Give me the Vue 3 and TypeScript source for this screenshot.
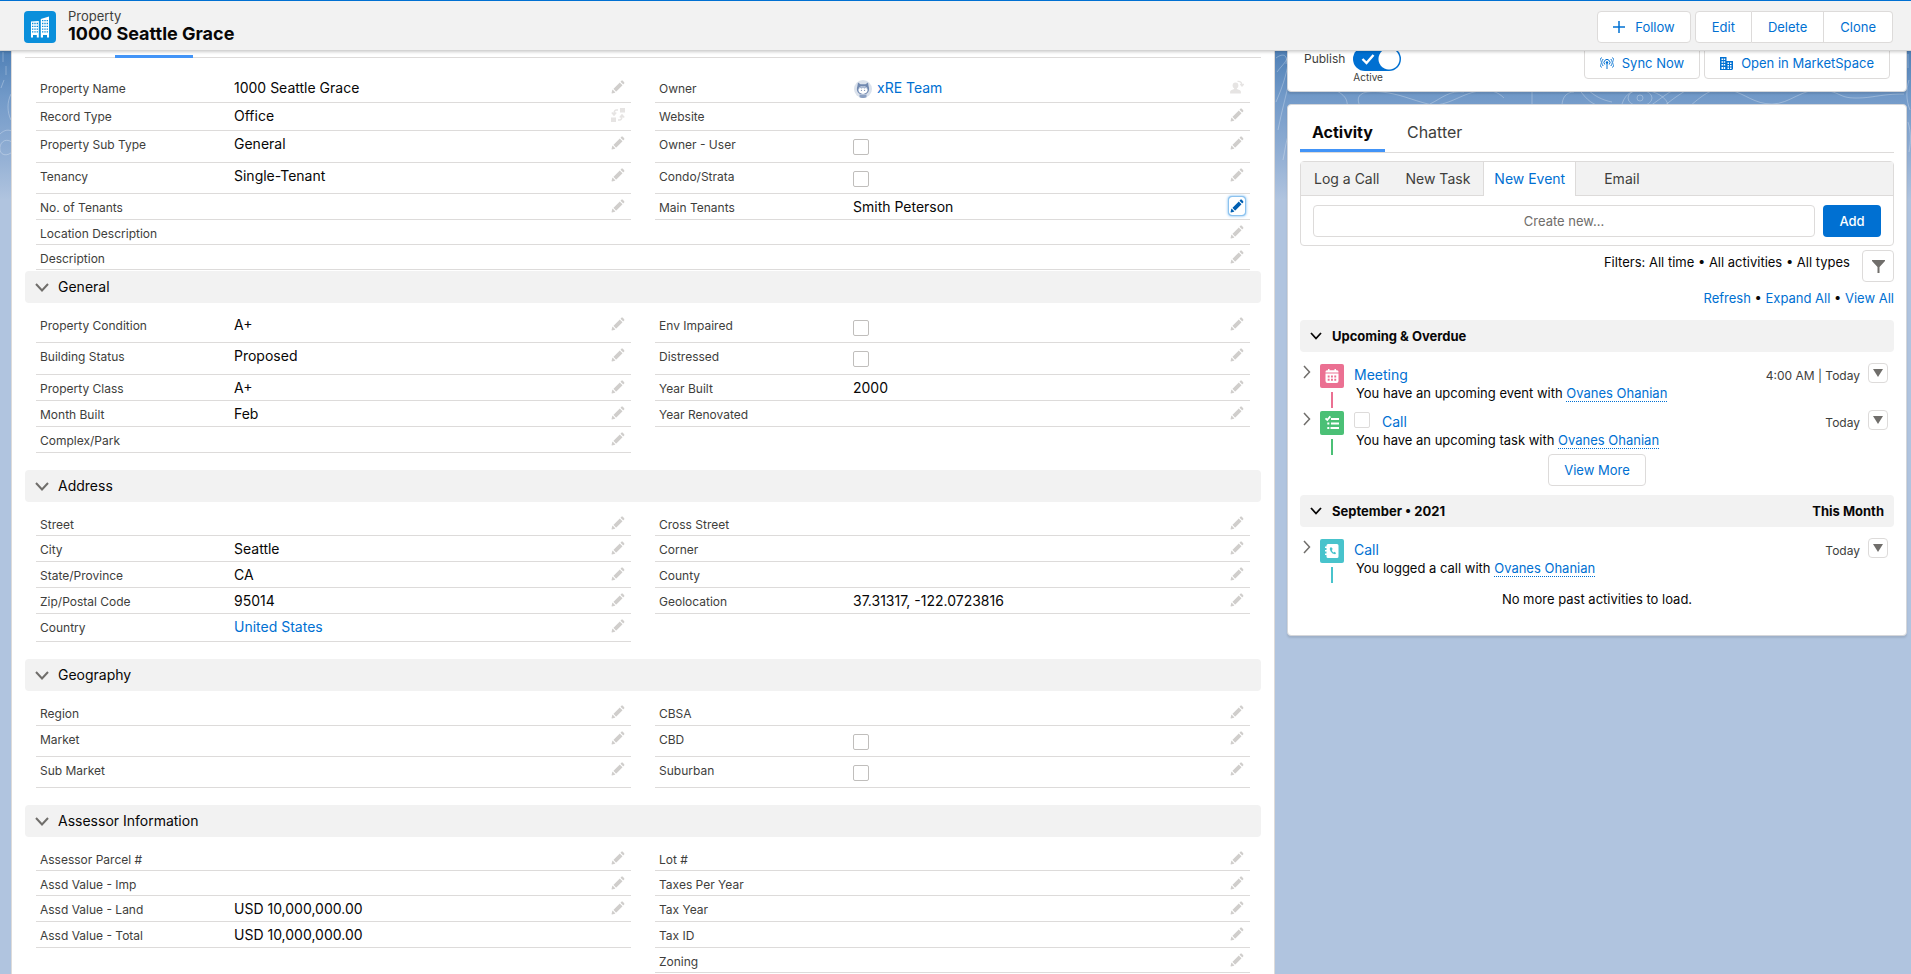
<script setup lang="ts">
import { ref } from 'vue'

type Size = 'xs' | 'sm' | 'md' | 'lg' | 'xl'
type Action = 'edit' | 'type' | 'owner' | 'none'

interface Field {
  id: string
  label: string
  size: Size
  value?: string
  link?: boolean
  avatar?: boolean
  check?: boolean
  action: Action
  focused?: boolean
}

interface Section {
  title: string
  left: Field[]
  right: Field[]
  full: Field[]
}

function f(label: string, size: Size, extra: Partial<Field> = {}): Field {
  return { id: label.toLowerCase().replace(/[^a-z]+/g, '-'), label, size, action: 'edit', ...extra }
}

const sections: Section[] = [
  {
    title: '',
    left: [
      f('Property Name', 'md', { value: '1000 Seattle Grace' }),
      f('Record Type', 'md', { value: 'Office', action: 'type' }),
      f('Property Sub Type', 'xl', { value: 'General' }),
      f('Tenancy', 'lg', { value: 'Single-Tenant' }),
      f('No. of Tenants', 'sm'),
    ],
    right: [
      f('Owner', 'md', { value: 'xRE Team', link: true, avatar: true, action: 'owner' }),
      f('Website', 'md'),
      f('Owner - User', 'xl', { check: true }),
      f('Condo/Strata', 'lg', { check: true }),
      f('Main Tenants', 'sm', { value: 'Smith Peterson', focused: true }),
    ],
    full: [f('Location Description', 'xs'), f('Description', 'xs')],
  },
  {
    title: 'General',
    left: [
      f('Property Condition', 'lg', { value: 'A+' }),
      f('Building Status', 'xl', { value: 'Proposed' }),
      f('Property Class', 'sm', { value: 'A+' }),
      f('Month Built', 'sm', { value: 'Feb' }),
      f('Complex/Park', 'sm'),
    ],
    right: [
      f('Env Impaired', 'lg', { check: true }),
      f('Distressed', 'xl', { check: true }),
      f('Year Built', 'sm', { value: '2000' }),
      f('Year Renovated', 'sm'),
    ],
    full: [],
  },
  {
    title: 'Address',
    left: [
      f('Street', 'xs'),
      f('City', 'sm', { value: 'Seattle' }),
      f('State/Province', 'sm', { value: 'CA' }),
      f('Zip/Postal Code', 'sm', { value: '95014' }),
      f('Country', 'md', { value: 'United States', link: true }),
    ],
    right: [
      f('Cross Street', 'xs'),
      f('Corner', 'sm'),
      f('County', 'sm'),
      f('Geolocation', 'sm', { value: '37.31317, -122.0723816' }),
    ],
    full: [],
  },
  {
    title: 'Geography',
    left: [f('Region', 'sm'), f('Market', 'lg'), f('Sub Market', 'lg')],
    right: [f('CBSA', 'sm'), f('CBD', 'lg', { check: true }), f('Suburban', 'lg', { check: true })],
    full: [],
  },
  {
    title: 'Assessor Information',
    left: [
      f('Assessor Parcel #', 'xs'),
      f('Assd Value - Imp', 'xs'),
      f('Assd Value - Land', 'sm', { value: 'USD 10,000,000.00' }),
      f('Assd Value - Total', 'sm', { value: 'USD 10,000,000.00', action: 'none' }),
    ],
    right: [f('Lot #', 'xs'), f('Taxes Per Year', 'xs'), f('Tax Year', 'sm'), f('Tax ID', 'sm'), f('Zoning', 'xs')],
    full: [],
  },
]

function groups(s: Section) {
  return [
    { key: 'left', fields: s.left },
    { key: 'right', fields: s.right },
    { key: 'full', fields: s.full },
  ].filter((g) => g.fields.length > 0)
}

interface Activity {
  kind: 'event' | 'task' | 'call'
  title: string
  text: string
  when: string
}

const timeline: { title: string; note: string; items: Activity[]; more: boolean }[] = [
  {
    title: 'Upcoming & Overdue',
    note: '',
    more: true,
    items: [
      { kind: 'event', title: 'Meeting', text: 'You have an upcoming event with', when: '4:00 AM | Today' },
      { kind: 'task', title: 'Call', text: 'You have an upcoming task with', when: 'Today' },
    ],
  },
  {
    title: 'September • 2021',
    note: 'This Month',
    more: false,
    items: [{ kind: 'call', title: 'Call', text: 'You logged a call with', when: 'Today' }],
  },
]

const composerTabs = ['Log a Call', 'New Task', 'New Event', 'Email']
const activeComposer = ref('New Event')
const published = ref(true)
const draft = ref('')
</script>

<template>
  <div class="page">
    <svg class="topo" viewBox="0 0 1911 150" preserveAspectRatio="none" aria-hidden="true">
      <g fill="none" stroke="#fff" stroke-opacity=".28">
        <path d="M3 2v10M6 16v9M4 30l-3 8M11 44c-4 8-4 18 0 26M0 84c5-5 9-4 12-3M12 92c-8-5-13 2-12 8s8 6 12 2" />
        <path d="M1276 8c8-6 12-2 10 6M1277 22c6-8 10-10 11-18M1276 52c6-14 10-26 12-38M1278 80c4-20 7-30 10-44M1283 110c2-10 3-18 5-24" />
        <path d="M1289 38c14 6 30-6 46 2s10 14 14 18M1360 56c-6-12 4-16 22-14s30 8 46 12 30-8 46-12 24 0 30 6M1430 54c12-6 20-14 34-12M1532 42v12M1562 56c0-8 4-14 12-14M1578 38c6 8 12 16 22 18M1586 38c8 8 16 12 26 14M1622 54c4-12 12-14 20-14s22 4 26 14M1650 56c12-8 20-16 30-18M1664 56c10-8 16-12 26-18M1690 56c14-12 24-20 40-16s24 14 42 14 30-16 50-14 16 8 34 8 24-4 48-4" />
        <ellipse cx="1640" cy="48" rx="12" ry="8" />
        <circle cx="1640" cy="48" r="3" />
        <path d="M1908 4v14M1909 30c-3 10-3 20 1 30M1908 72c3 10 3 20 1 30" />
      </g>
    </svg>

    <header class="record-header">
      <svg class="record-icon" viewBox="0 0 32 32" aria-hidden="true">
        <rect width="32" height="32" rx="4" fill="#0a8fdb" />
        <path fill="#fff" d="M7 10.500l7.800-.5v16.500h-2v-2.500h-3.800v2.500H7zM16.800 8l8.200-2.500v21h-2v-2.500h-4v2.500h-2.200z" />
        <path stroke="#0a8fdb" stroke-width="1.300" stroke-dasharray="1.400 .9" d="M8 12.500h6M8 15.300h6M8 18.100h6M8 20.900h6M18 9.700h6M18 12.500h6M18 15.300h6M18 18.100h6M18 20.900h6" />
      </svg>
      <div class="record-name">
        <p>Property</p>
        <h1>1000 Seattle Grace</h1>
      </div>
      <button type="button" class="btn follow">
        <svg width="12" height="12" viewBox="0 0 12 12" aria-hidden="true"><path d="M6 0v12M0 6h12" stroke="currentColor" stroke-width="1.500" /></svg>
        Follow
      </button>
      <div class="btn-group">
        <button type="button" class="btn">Edit</button>
        <button type="button" class="btn">Delete</button>
        <button type="button" class="btn">Clone</button>
      </div>
    </header>

    <div class="columns">
      <main class="panel">
        <div class="tab-rule"><span></span></div>
        <section v-for="s in sections" :key="s.title" class="section">
          <h2 v-if="s.title">
            <button type="button" class="section-title">
              <svg width="14" height="9" viewBox="0 0 14 9" aria-hidden="true"><path d="M1 1l6 6.500 6-6.500" fill="none" stroke="#706e6b" stroke-width="2" /></svg>
              {{ s.title }}
            </button>
          </h2>
          <div class="fields">
            <dl v-for="g in groups(s)" :key="g.key" :class="g.key">
              <div v-for="x in g.fields" :key="x.id" class="field" :class="x.size">
                <dt>
                  <label v-if="x.check" :for="x.id">{{ x.label }}</label>
                  <template v-else>{{ x.label }}</template>
                </dt>
                <dd>
                  <input v-if="x.check" :id="x.id" type="checkbox" class="tick" />
                  <svg v-if="x.avatar" class="avatar" viewBox="0 0 18 18" aria-hidden="true">
                    <circle cx="9" cy="9" r="9" fill="#dbe2ec" />
                    <path fill="#7189b0" d="M4 2.500l2.500 1.700h5L14 2.500l.6 3.800c1.300 3.700-.1 6.700-2.600 7.700h-6c-2.500-1-3.900-4-2.600-7.700z" />
                    <path fill="#8ba0c2" d="M5.500 14.500h7v2.800a9 9 0 0 1-7 0z" />
                    <ellipse cx="9" cy="10" rx="4.600" ry="3.900" fill="#fff" />
                    <path d="M4.600 8.800c.8-2.200 2.800-2.800 4.400-2.800s3.600.6 4.400 2.800l-1.800-.9-1.200.9-1.400-1-1.400 1-1.200-.9z" fill="#a5b5cf" />
                    <circle cx="7.400" cy="10.300" r=".6" fill="#7189b0" /><circle cx="10.600" cy="10.300" r=".6" fill="#7189b0" />
                  </svg>
                  <a v-if="x.link" href="#">{{ x.value }}</a>
                  <template v-else>{{ x.value }}</template>
                </dd>
                <button v-if="x.action !== 'none'" type="button" class="edit" :class="{ focused: x.focused, faint: x.action !== 'edit' }" :aria-label="`Edit ${x.label}`">
                  <svg v-if="x.action === 'edit'" viewBox="0 0 52 52" aria-hidden="true">
                    <path d="M9.500 33.400l8.900 8.900c.4.400 1 .4 1.400 0L42 20c.4-.4.400-1 0-1.400l-8.800-8.800c-.4-.4-1-.4-1.400 0L9.500 32.100c-.4.400-.4 1 0 1.300zM36.100 5.700c-.4.400-.4 1 0 1.400l8.800 8.800c.4.400 1 .4 1.400 0l2.500-2.500c1.600-1.500 1.600-3.900 0-5.500l-4.700-4.700c-1.600-1.600-4.100-1.600-5.700 0l-2.300 2.500zM2.100 48.200c-.2 1 .7 1.900 1.700 1.700l10.900-2.600c.4-.1.700-.3.900-.5l.2-.2c.2-.2.300-.9-.1-1.300l-9-9c-.4-.4-1.100-.3-1.300-.1s-.2.200-.2.200c-.3.300-.4.600-.5.900L2.100 48.200z" />
                  </svg>
                  <svg v-else-if="x.action === 'type'" viewBox="0 0 14 14" aria-hidden="true">
                    <path d="M9 0h5v4.500H9zM0 9.500h5V14H0z" />
                    <path d="M7 2H5.500Q3 2 3 6M.8 4.500L3 7l2.200-2.500M7 12h1.500Q11 12 11 8M8.800 9.500L11 7l2.200 2.500" fill="none" stroke="currentColor" stroke-width="1.500" />
                  </svg>
                  <svg v-else viewBox="0 0 14 14" aria-hidden="true">
                    <circle cx="5.500" cy="5.500" r="2.900" />
                    <path d="M4.100 7h2.800v2l3 1.200q1 .5 1 1.500V13.500H.1v-1.800q0-1 1-1.500l3-1.200z" />
                    <path d="M7.500 1.500Q11.500 1 12 5M10.300 4l1.700 2 1.700-2" fill="none" stroke="currentColor" stroke-width="1.300" />
                  </svg>
                </button>
              </div>
            </dl>
          </div>
        </section>
      </main>

      <aside class="side">
        <section class="card publish">
          <label for="publish">Publish</label>
          <div class="toggle-wrap">
            <input id="publish" v-model="published" type="checkbox" class="toggle" />
            <svg class="toggle-mark" width="14" height="12" viewBox="0 0 14 12" aria-hidden="true"><path d="M1.500 6l4 4 7-8" fill="none" stroke="#fff" stroke-width="2.400" /></svg>
            <span>Active</span>
          </div>
          <button type="button" class="btn sync">
            <svg width="14" height="12" viewBox="0 0 14 12" aria-hidden="true">
              <path d="M7 5v7M4.800 7.500a3 3 0 1 1 4.400 0M3.200 9a5.300 5.300 0 0 1 0-7M10.800 9a5.300 5.300 0 0 0 0-7M1.500 10.500a7.500 7.500 0 0 1 0-10M12.500 10.500a7.500 7.500 0 0 0 0-10" fill="none" stroke="currentColor" />
              <circle cx="7" cy="5.500" r="1.200" fill="currentColor" />
            </svg>
            Sync Now
          </button>
          <button type="button" class="btn market">
            <svg width="13" height="13" viewBox="0 0 13 13" aria-hidden="true">
              <path d="M0 0h6.500v4H13v8h-.5v1H0zM1.500 1.500V3H3V1.500zm2.200 0V3h1.500V1.500zM1.500 4.300v1.500H3V4.300zm2.200 0v1.500h1.500V4.300zM1.500 7.100v1.500H3V7.100zm2.200 0v1.500h1.500V7.100zM1.500 9.900V12H3V9.900zm2.200 0V12h1.500V9.900zM7.500 5.500V7H9V5.500zm2.500 0V7h1.500V5.500zM7.500 8v1.500H9V8zM10 8v1.500h1.500V8zM7.500 10.500V12H9v-1.500zm2.500 0V12h1.500v-1.500z" fill="currentColor" fill-rule="evenodd" />
            </svg>
            Open in MarketSpace
          </button>
        </section>

        <section class="card activity">
          <nav class="tabs">
            <button type="button" class="on">Activity</button>
            <button type="button">Chatter</button>
          </nav>

          <div class="composer">
            <div class="composer-tabs">
              <button v-for="t in composerTabs" :key="t" type="button" :class="{ on: t === activeComposer }" @click="activeComposer = t">{{ t }}</button>
            </div>
            <form class="composer-row" @submit.prevent>
              <input v-model="draft" type="text" placeholder="Create new..." aria-label="Create new" />
              <button type="submit">Add</button>
            </form>
          </div>

          <div class="filters">
            <p>Filters: All time • All activities • All types</p>
            <button type="button" aria-label="Filter timeline">
              <svg width="13" height="13" viewBox="0 0 13 13" aria-hidden="true"><path d="M0 0h13v1L7.500 7v6h-2V7L0 1z" fill="#706e6b" /></svg>
            </button>
          </div>
          <p class="links"><a href="#">Refresh</a> • <a href="#">Expand All</a> • <a href="#">View All</a></p>

          <section v-for="g in timeline" :key="g.title" class="group">
            <h3>
              <svg width="12" height="8" viewBox="0 0 12 8" aria-hidden="true"><path d="M1 1l5 5.500L11 1" fill="none" stroke="#080707" stroke-width="1.800" /></svg>
              <span>{{ g.title }}</span>
              <span class="note">{{ g.note }}</span>
            </h3>
            <ul>
              <li v-for="a in g.items" :key="a.kind" :class="a.kind">
                <button type="button" class="expand" aria-label="Show details">
                  <svg width="8" height="14" viewBox="0 0 8 14" aria-hidden="true"><path d="M1 1l5.500 6L1 13" fill="none" stroke="#706e6b" stroke-width="1.500" /></svg>
                </button>
                <div class="rail">
                  <svg width="24" height="24" viewBox="0 0 24 24" aria-hidden="true">
                    <rect width="24" height="24" rx="2" fill="currentColor" />
                    <g v-if="a.kind === 'event'">
                      <path d="M5.500 9.500h13V17a2 2 0 0 1-2 2h-9a2 2 0 0 1-2-2zM5.500 8.500v-.8q0-1.500 1.500-1.500h1V5h1.500v1.200h5V5H16v1.200h1q1.500 0 1.500 1.500v.8z" fill="#fff" />
                      <path d="M7.700 12.500h9M7.700 15.800h9" stroke="currentColor" stroke-width="1.900" stroke-dasharray="1.900 1.400" />
                    </g>
                    <g v-else-if="a.kind === 'task'" fill="none" stroke="#fff" stroke-width="1.800">
                      <path d="M5.500 7.300L7.300 9l3-3.600M11 8h8M11 12.500h8M10.500 17H19M7.300 12.500h2M7.300 17h2" />
                    </g>
                    <g v-else>
                      <path d="M8 5h9a1.500 1.500 0 0 1 1.500 1.500v11A1.500 1.500 0 0 1 17 19H8a1.500 1.500 0 0 1-1.500-1.500V16H5v-1.500h1.500v-2H5V11h1.500V9H5V7.500h1.500v-1A1.500 1.500 0 0 1 8 5z" fill="#fff" />
                      <path d="M10 8.500q-.8 1.500.7 4t4.300 2.800q1-.5 1-1.300l-1.400-1.200-1.100.6q-1.500-.7-1.600-2.300l.8-1-.9-1.700z" fill="currentColor" />
                    </g>
                  </svg>
                  <i></i>
                </div>
                <div class="body">
                  <p class="head">
                    <input v-if="a.kind === 'task'" type="checkbox" class="tick" aria-label="Mark Call complete" />
                    <a href="#">{{ a.title }}</a>
                  </p>
                  <p class="desc">{{ a.text }} <a href="#">Ovanes Ohanian</a></p>
                </div>
                <span class="when">{{ a.when }}</span>
                <button type="button" class="menu" aria-label="More actions">
                  <svg width="10" height="8" viewBox="0 0 10 8" aria-hidden="true"><path d="M0 0h10L5 8z" fill="#706e6b" /></svg>
                </button>
              </li>
            </ul>
            <button v-if="g.more" type="button" class="btn more">View More</button>
          </section>
          <p class="end">No more past activities to load.</p>
        </section>
      </aside>
    </div>
  </div>
</template>

<style>
body {
  background: #b0c4df;
  overflow: hidden;
}
</style>

<style scoped>
.page {
  position: relative;
  display: flex;
  flex-direction: column;
  min-height: 100vh;
  box-sizing: border-box;
  font-family: Inter, "Liberation Sans", sans-serif;
  font-size: 13px;
  line-height: 20px;
  color: #080707;
  background: linear-gradient(#4f80b6 50px, #7199c8 96px, #8fadd3 150px, #b0c4df 200px);
}
.page * {
  box-sizing: border-box;
}
h1, h2, h3, p, dl, dd, ul {
  margin: 0;
  padding: 0;
}
button, input {
  font: inherit;
  color: inherit;
}
button {
  padding: 0;
  border: 0;
  background: none;
}
a {
  color: #0070d2;
  text-decoration: none;
}
.topo {
  position: absolute;
  top: 50px;
  left: 0;
  width: 100%;
  height: 150px;
}
.record-header {
  position: relative;
  z-index: 2;
  display: flex;
  align-items: center;
  height: 51px;
  padding: 2px 18px 0 24px;
  border-top: 1px solid #0070d2;
  border-bottom: 1px solid #d4d4d4;
  background: #f2f2f2;
  box-shadow: 0 1px 3px rgba(0, 0, 0, 0.2);
}
.record-icon {
  width: 32px;
  height: 32px;
}
.record-name {
  flex: 1;
  margin-left: 12px;
}
.record-name p {
  line-height: 15px;
  color: #3e3e3c;
}
.record-name h1 {
  font-size: 18px;
  line-height: 20px;
  font-weight: 700;
}
.btn {
  display: flex;
  align-items: center;
  justify-content: center;
  height: 32px;
  padding: 0 15px;
  border: 1px solid #dddbda;
  border-radius: 4px;
  background: #fff;
  color: #0070d2;
  white-space: nowrap;
}
.follow {
  gap: 10px;
}
.btn-group {
  display: flex;
  margin-left: 4px;
}
.btn-group .btn {
  padding: 0 16px;
}
.btn-group .btn + .btn {
  border-left: 0;
}
.btn-group .btn:not(:last-child) {
  border-top-right-radius: 0;
  border-bottom-right-radius: 0;
}
.btn-group .btn:not(:first-child) {
  border-top-left-radius: 0;
  border-bottom-left-radius: 0;
}

.columns {
  position: relative;
  flex: 1;
  display: grid;
  grid-template-columns: 1264fr 620fr;
  gap: 12px;
  margin-top: -16px;
  padding: 0 4px 0 11px;
}
.panel {
  padding: 20px 13px 0;
  border: solid #dddbda;
  border-width: 0 1px;
  background: #fff;
}
.tab-rule {
  display: flex;
  padding-left: 90px;
  margin-bottom: 8px;
  border-bottom: 1px solid #dddbda;
}
.tab-rule span {
  width: 78px;
  height: 3px;
  margin-bottom: -1px;
  background: #4294f7;
}
.section h2 {
  font-weight: 400;
  font-size: 14px;
}
.section-title {
  display: flex;
  align-items: center;
  gap: 9px;
  width: 100%;
  height: 32px;
  padding-left: 10px;
  border-radius: 4px;
  background: #f2f2f2;
}
.fields {
  display: grid;
  grid-template-columns: 1fr 1fr;
  column-gap: 24px;
  align-items: start;
  padding: 9px 11px 17px;
}
.section:first-of-type .fields {
  padding-bottom: 1px;
}
.section:last-of-type .fields {
  padding-bottom: 0;
}
.full {
  grid-column: 1 / -1;
}
.field {
  display: flex;
  align-items: flex-start;
  border-bottom: 1px solid #dddbda;
}
.xs { height: 25px; }
.sm { height: 26px; }
.md { height: 28px; }
.lg { height: 31px; }
.xl { height: 32px; }
dt {
  flex: 0 0 198px;
  padding: 5px 0 0 4px;
  font-size: 12px;
  line-height: 18px;
  color: #3e3e3c;
}
dd {
  flex: 1;
  display: flex;
  padding-top: 3px;
  font-size: 14px;
  line-height: 20px;
}
.avatar {
  width: 18px;
  height: 18px;
  margin: 2px 5px 0 1px;
}
.tick {
  appearance: none;
  width: 16px;
  height: 16px;
  margin: 5px 0 0;
  border: 1px solid #c0bebc;
  border-radius: 2px;
  background: #fff;
}
.edit {
  display: flex;
  align-items: center;
  justify-content: center;
  width: 16px;
  height: 18px;
  margin: 3px 5px 0 0;
  border-radius: 3px;
  color: #d0cecc;
}
.edit svg {
  width: 14px;
  height: 14px;
  fill: currentColor;
}
.edit.faint {
  color: #e6e4e3;
}
.edit.focused {
  color: #005fb2;
  box-shadow: 0 0 0 1px #8cc2ee, 0 0 3px 1px #6bb3ee;
}

.side {
  display: flex;
  flex-direction: column;
  gap: 12px;
}
.card {
  border: 1px solid #d4d6da;
  border-radius: 4px;
  background: #fff;
  box-shadow: 0 2px 2px rgba(0, 0, 0, 0.1);
}
.publish {
  display: flex;
  align-items: flex-start;
  height: 57px;
  padding: 11px 16px 0;
}
.publish label {
  margin-right: 8px;
  font-size: 12px;
  line-height: 24px;
  color: #3e3e3c;
}
.toggle-wrap {
  position: relative;
  flex: 1;
}
.toggle {
  appearance: none;
  display: block;
  width: 48px;
  height: 24px;
  margin: 0;
  border-radius: 12px;
  background: radial-gradient(circle at 36px 12px, #fff 10px, #0070d2 11px);
}
.toggle-mark {
  position: absolute;
  top: 6px;
  left: 8px;
}
.toggle-wrap span {
  display: block;
  font-size: 10px;
  line-height: 13px;
  color: #3e3e3c;
}
.sync {
  gap: 8px;
  margin-right: 4px;
}
.market {
  gap: 8px;
}
.activity {
  padding: 3px 12px 26px;
}
.tabs {
  display: flex;
  border-bottom: 1px solid #dddbda;
}
.tabs button {
  height: 44px;
  padding: 4px 12px 0;
  font-size: 16px;
  color: #3e3e3c;
}
.tabs button + button {
  margin-left: 10px;
}
.tabs .on {
  margin-bottom: -1px;
  padding-top: 7px;
  border-bottom: 3px solid #4294f7;
  font-weight: 700;
  color: #080707;
}
.composer {
  margin-top: 8px;
  border: 1px solid #dddbda;
  border-radius: 4px;
}
.composer-tabs {
  display: flex;
  height: 34px;
  border-bottom: 1px solid #dddbda;
  background: #f2f2f2;
}
.composer-tabs button {
  padding: 0 13px;
  font-size: 14px;
  color: #3e3e3c;
}
.composer-tabs .on {
  height: 34px;
  padding: 0 10px;
  border: solid #dddbda;
  border-width: 0 1px;
  background: #fff;
  color: #0070d2;
}
.composer-tabs .on + button {
  padding: 0 28px;
}
.composer-row {
  display: flex;
  gap: 8px;
  padding: 9px 12px 8px;
}
.composer-row input {
  flex: 1;
  min-width: 0;
  height: 32px;
  border: 1px solid #dddbda;
  border-radius: 4px;
  text-align: center;
}
.composer-row input::placeholder {
  color: #706e6b;
}
.composer-row button {
  width: 58px;
  height: 32px;
  border-radius: 4px;
  background: #0070d2;
  color: #fff;
  font-weight: 500;
}
.filters {
  display: flex;
  justify-content: flex-end;
  margin-top: 4px;
}
.filters p {
  margin: 2px 12px 0 0;
}
.filters button {
  display: flex;
  align-items: center;
  justify-content: center;
  width: 32px;
  height: 32px;
  border: 1px solid #dddbda;
  border-radius: 4px;
}
.links {
  margin: 6px 0 12px;
  text-align: right;
}
.group {
  margin-bottom: 9px;
}
.group:last-of-type {
  margin-bottom: 4px;
}
.group h3 {
  display: flex;
  align-items: center;
  gap: 10px;
  height: 32px;
  padding: 0 10px;
  border-radius: 4px;
  background: #f2f2f2;
  font-size: 13px;
  font-weight: 700;
}
.note {
  margin-left: auto;
}
.group ul {
  padding-top: 11px;
  list-style: none;
}
.group li {
  display: flex;
  align-items: flex-start;
  height: 47px;
}
.expand {
  display: flex;
  width: 20px;
  padding: 2px 0 0 3px;
}
.event .rail { color: #eb7092; }
.task .rail { color: #4bc076; }
.call .rail { color: #48c3cc; }
.rail {
  display: flex;
  flex-direction: column;
  align-items: center;
  gap: 4px;
  width: 24px;
  padding-top: 1px;
}
.rail svg {
  display: block;
}
.rail i {
  width: 2px;
  height: 16px;
  background: currentColor;
}
.body {
  flex: 1;
  padding-left: 10px;
}
.head {
  display: flex;
  padding-top: 2px;
  font-size: 14px;
}
.head .tick {
  margin: 0 12px 0 0;
  border-color: #dddbda;
}
.desc {
  padding-left: 2px;
  line-height: 16px;
}
.desc a {
  border-bottom: 1px dotted #0070d2;
}
.when {
  padding-top: 3px;
  margin-right: 8px;
  font-size: 12px;
  color: #3e3e3c;
}
.menu {
  display: flex;
  align-items: center;
  justify-content: center;
  width: 20px;
  height: 20px;
  margin-right: 6px;
  border: 1px solid #dddbda;
  border-radius: 4px;
}
.more {
  margin: -3px auto 0;
}
.end {
  text-align: center;
}
</style>
